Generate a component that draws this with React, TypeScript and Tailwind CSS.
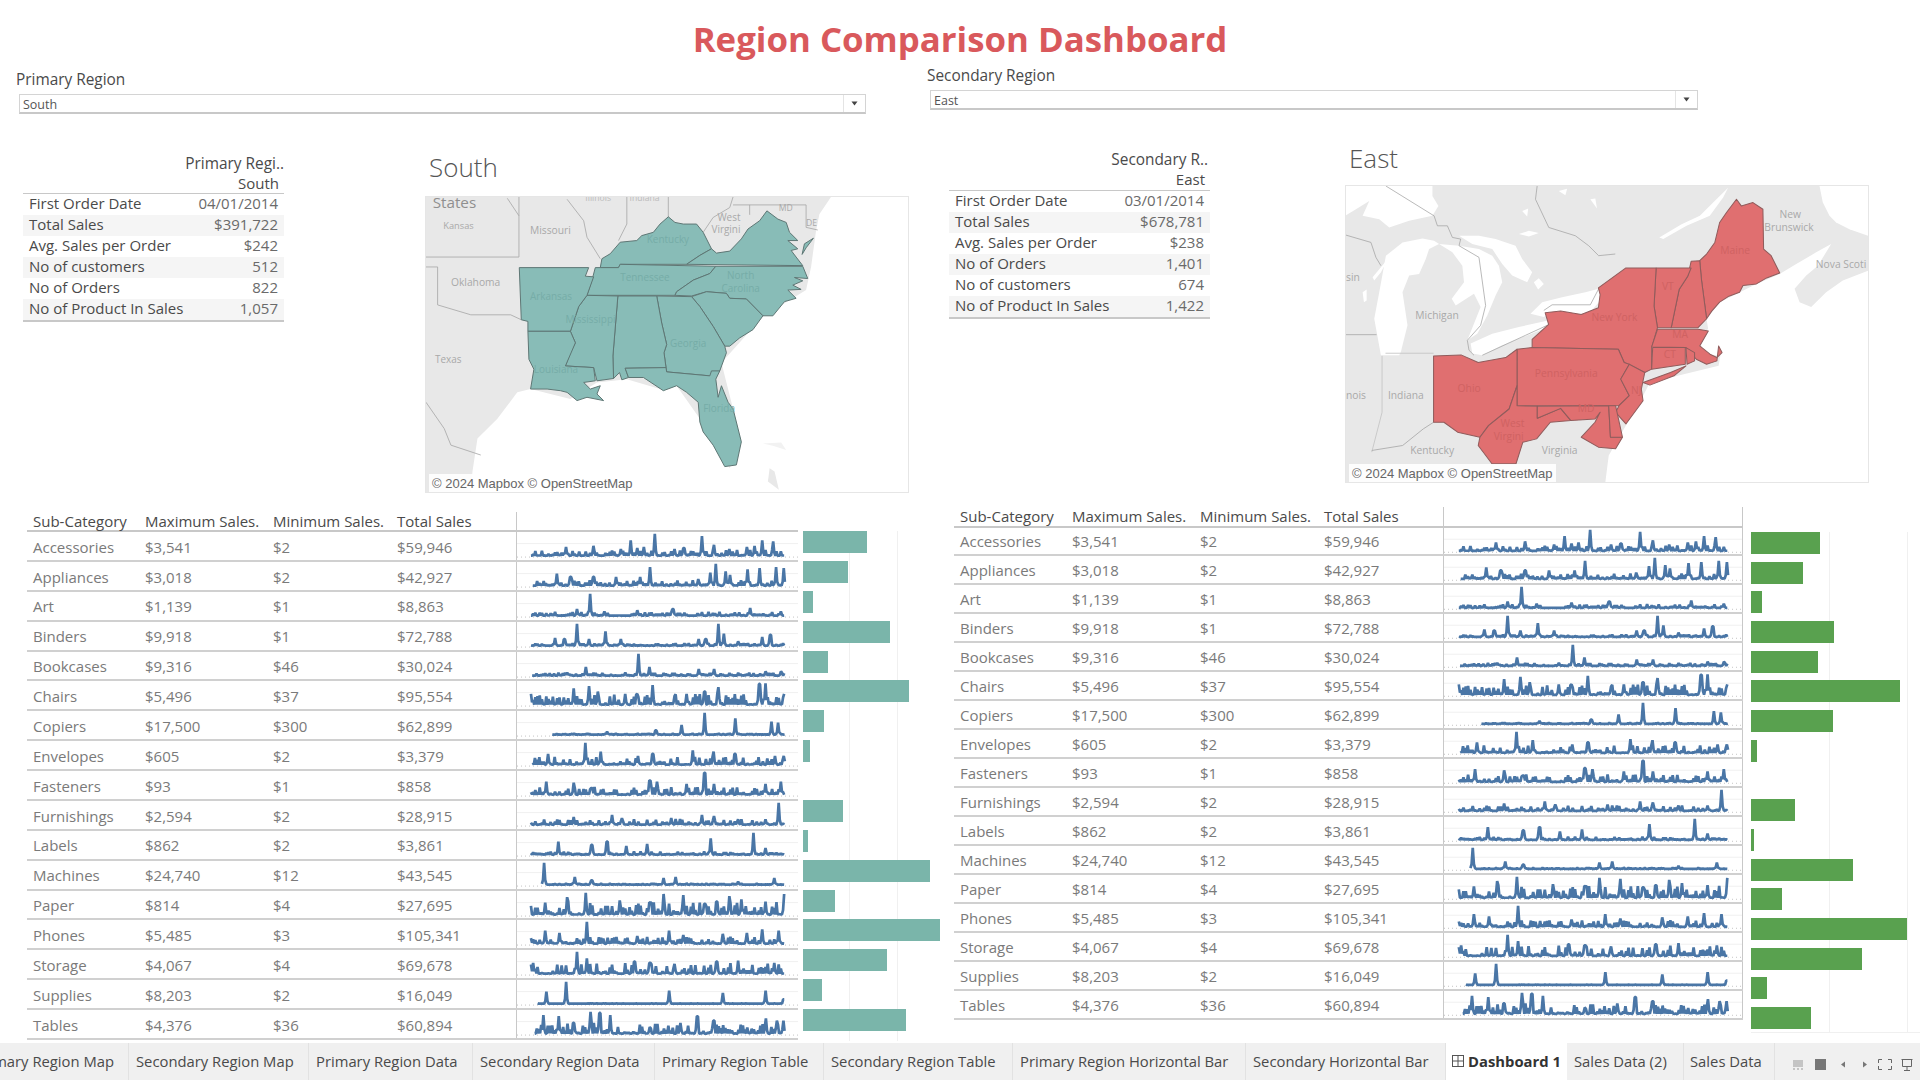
import React from "react";

const FONT = "font-['Open_Sans','Noto_Sans',sans-serif]";

type Row = { n: string; max: string; min: string; tot: string; lb: number; rb: number; start: number; noise: number; sp: number[][] };

const rows: Row[] = [
  { n: "Accessories", max: "$3,541", min: "$2", tot: "$59,946", lb: 64, rb: 69, start: 865, noise: 0.26, sp: [[922,.4],[968,.45],[1012,.3],[1028,.7],[1040,.35],[1050,.4],[1068,1],[1100,.3],[1116,.35],[1145,.9],[1165,.5],[1190,.3],[1220,.4],[1232,.45],[1245,.7],[1262,.65]] },
  { n: "Appliances", max: "$3,018", min: "$2", tot: "$42,927", lb: 45, rb: 52, start: 868, noise: 0.26, sp: [[908,.55],[930,.4],[968,.4],[1005,.4],[1045,.4],[1060,.85],[1140,.3],[1160,.6],[1168,1],[1185,.65],[1192,.5],[1220,.75],[1240,.8],[1268,.85],[1280,.8]] },
  { n: "Art", max: "$1,139", min: "$1", tot: "$8,863", lb: 10, rb: 11, start: 865, noise: 0.18, sp: [[940,.3],[962,1],[985,.2],[1040,.25],[1098,.3],[1225,.35],[1275,.2]] },
  { n: "Binders", max: "$9,918", min: "$1", tot: "$72,788", lb: 87, rb: 83, start: 865, noise: 0.12, sp: [[905,.35],[920,.3],[940,1],[960,.3],[988,.65],[1012,.3],[1140,.3],[1152,.3],[1172,1],[1182,.55],[1205,.2],[1245,.4],[1258,.5]] },
  { n: "Bookcases", max: "$9,316", min: "$46", tot: "$30,024", lb: 24.5, rb: 67, start: 867, noise: 0.14, sp: [[925,.15],[955,.4],[1020,.15],[1042,1],[1060,.4],[1140,.3],[1165,.3],[1250,.2],[1275,.2]] },
  { n: "Chairs", max: "$5,496", min: "$37", tot: "$95,554", lb: 106, rb: 149, start: 865, noise: 0.5, sp: [[865,.5],[935,.75],[960,.85],[975,.6],[1020,.5],[1040,.5],[1064,.9],[1100,.4],[1120,.5],[1150,.6],[1172,.8],[1240,.95],[1250,.98],[1280,.5]] },
  { n: "Copiers", max: "$17,500", min: "$300", tot: "$62,899", lb: 21, rb: 82, start: 900, noise: 0.07, sp: [[990,.15],[1070,.2],[1112,.45],[1150,1],[1200,.75],[1260,.6],[1270,.55]] },
  { n: "Envelopes", max: "$605", min: "$2", tot: "$3,379", lb: 7, rb: 6, start: 868, noise: 0.36, sp: [[893,.5],[955,1],[980,.6],[1040,.4],[1065,.5],[1130,.65],[1165,.6],[1200,.5],[1265,.4],[1280,.4]] },
  { n: "Fasteners", max: "$93", min: "$1", tot: "$858", lb: 0, rb: 0, start: 865, noise: 0.36, sp: [[890,.6],[935,.55],[965,.3],[1060,.65],[1072,.6],[1120,.5],[1150,1],[1165,.5],[1250,.5],[1275,.6]] },
  { n: "Furnishings", max: "$2,594", min: "$2", tot: "$28,915", lb: 40, rb: 44, start: 865, noise: 0.26, sp: [[935,.35],[998,.45],[1015,.3],[1095,.3],[1145,.45],[1165,.4],[1205,.25],[1250,.25],[1272,1]] },
  { n: "Labels", max: "$862", min: "$2", tot: "$3,861", lb: 5, rb: 3, start: 865, noise: 0.15, sp: [[910,.6],[965,.45],[990,.6],[1022,.4],[1055,.5],[1160,.75],[1230,1],[1250,.3]] },
  { n: "Machines", max: "$24,740", min: "$12", tot: "$43,545", lb: 127, rb: 102, start: 883, noise: 0.07, sp: [[886,1],[937,.35],[965,.2],[1082,.3],[1102,.35],[1205,.15],[1265,.3]] },
  { n: "Paper", max: "$814", min: "$4", tot: "$27,695", lb: 32, rb: 31, start: 865, noise: 0.62, sp: [[888,.55],[925,.8],[955,1],[1010,.65],[1060,.55],[1082,.95],[1115,.9],[1150,.5],[1170,.6],[1190,.85],[1210,.7],[1250,.6],[1280,.95]] },
  { n: "Phones", max: "$5,485", min: "$3", tot: "$105,341", lb: 137, rb: 156, start: 865, noise: 0.34, sp: [[865,.2],[888,.6],[912,.5],[957,1],[1040,.35],[1092,.6],[1115,.4],[1180,.45],[1220,.5],[1245,.65],[1272,.6]] },
  { n: "Storage", max: "$4,067", min: "$4", tot: "$69,678", lb: 84, rb: 111, start: 865, noise: 0.48, sp: [[868,.5],[940,1],[957,.7],[1035,.55],[1060,.5],[1100,.45],[1170,.55],[1205,.6],[1265,.5]] },
  { n: "Supplies", max: "$8,203", min: "$2", tot: "$16,049", lb: 19, rb: 16, start: 876, noise: 0.02, sp: [[890,.55],[923,1],[1092,.6],[1180,.5],[1250,.6],[1280,.2]] },
  { n: "Tables", max: "$4,376", min: "$36", tot: "$60,894", lb: 103, rb: 60, start: 871, noise: 0.5, sp: [[885,.85],[910,.8],[935,.5],[963,1],[978,.95],[995,.85],[1060,.3],[1110,.5],[1138,.8],[1165,.6],[1250,.7],[1268,.6],[1280,.6]] },
];

function sparkPath(r: Row, seed: number) {
  let s = seed * 7919 + 13;
  const rnd = () => {
    s = (s * 16807) % 2147483647;
    return s / 2147483647;
  };
  const pts: string[] = [];
  const x0 = 14 + ((r.start - 865) / 417) * 255;
  const base = 25.5;
  const amp = 23.5;
  const step = 1.1;
  let k = 0;
  for (let x = x0; x <= 269; x += step) {
    const u = rnd();
    // every other sample drops to the baseline, so the foot of the line reads as a solid mass
    let v = k % 2 === 0 ? u * u * r.noise : u * 0.04 * r.noise;
    for (const [p, h] of r.sp) {
      const px = 14 + ((p - 865) / 417) * 255;
      const d = Math.abs(px - x);
      if (d < step * 0.6) v = Math.max(v, h);
      else if (d < step * 1.5) v = Math.max(v, h * 0.22);
    }
    pts.push(`${x.toFixed(1)},${(base - v * amp).toFixed(1)}`);
    k++;
  }
  return "M" + pts.join("L");
}

function Spark({ r, i }: { r: Row; i: number }) {
  return (
    <svg viewBox="0 0 282 30" preserveAspectRatio="none" className="block w-full h-full">
      <line x1="0" x2="282" y1="12.5" y2="12.5" stroke="#f0f0f0" strokeWidth="1" vectorEffect="non-scaling-stroke" />
      <line x1="0" x2="282" y1="27" y2="27" stroke="#c4c4c4" strokeWidth="1" strokeDasharray="1 3" vectorEffect="non-scaling-stroke" />
      <path d={sparkPath(r, i + 1)} fill="none" stroke="#4a76a6" strokeWidth="2.7" strokeLinejoin="bevel" vectorEffect="non-scaling-stroke" />
    </svg>
  );
}

function SalesTable({ rowH, headH, sparkW, lastW, right }: { rowH: string; headH: string; sparkW: string; lastW: string; right?: boolean }) {
  const cellPad = right ? "pt-[1px]" : "pt-[2px]";
  return (
    <div className="flex flex-col">
      <div className={`flex items-center border-b-2 border-[#c8c8c8] text-[#4a4a4a] ${headH}`}>
        <div className="w-[118px] pl-[6px]">Sub-Category</div>
        <div className="w-[128px]">Maximum Sales.</div>
        <div className="w-[124px]">Minimum Sales.</div>
        <div className={lastW}>Total Sales</div>
        <div className={`${sparkW} h-full border-l border-[#c8c8c8] ${right ? "border-r" : ""}`} />
      </div>
      {rows.map((r, i) => (
        <div key={r.n} className={`flex items-center border-b-2 border-[#d0d0d0] text-[#7a7a7a] ${rowH}`}>
          <div className={`w-[118px] pl-[6px] ${cellPad}`}>{r.n}</div>
          <div className={`w-[128px] ${cellPad}`}>{r.max}</div>
          <div className={`w-[124px] ${cellPad}`}>{r.min}</div>
          <div className={`${lastW} ${cellPad}`}>{r.tot}</div>
          <div className={`${sparkW} h-full border-l border-[#c8c8c8] ${right ? "border-r" : ""}`}>
            <Spark r={r} i={i} />
          </div>
        </div>
      ))}
    </div>
  );
}

function Bars({ right }: { right?: boolean }) {
  return (
    <div className={right ? "relative ml-[8px] mt-[25px] w-[169px] h-[501px] border-b border-[#f0f0f0]" : "relative ml-[5px] mt-[19px] w-[160px] h-[510px]"}>
      <div className={`absolute top-0 bottom-0 w-px bg-[#f0f0f0] ${right ? "left-[78px]" : "left-[46px]"}`} />
      <div className={`absolute top-0 bottom-0 w-px bg-[#f0f0f0] ${right ? "left-[156px]" : "left-[94px]"}`} />
      <div className="relative flex flex-col">
        {rows.map((r) => (
          <div key={r.n} className={right ? "h-[29.7px]" : "h-[29.88px]"}>
            <div
              className={`h-[22px] ${right ? "bg-[#59a14f]" : "bg-[#7ab5aa]"}`}
              style={{ width: right ? r.rb : r.lb }}
            />
          </div>
        ))}
      </div>
    </div>
  );
}

function InfoTable({ head, sub, subH, headPad, items, width }: { head: string; sub: string; subH: string; headPad: string; items: string[][]; width: string }) {
  return (
    <div className={`${width} flex flex-col text-[#555]`}>
      <div className={`h-[20px] leading-[20px] text-right text-[15.4px] text-[#4a4a4a] whitespace-nowrap ${headPad}`}>{head}</div>
      <div className={`${subH} leading-[19px] text-right pr-[5px] text-[#4a4a4a]`}>{sub}</div>
      <div className="border-t border-b-2 border-[#c8c8c8]">
        {items.map((it, i) => (
          <div key={it[0]} className={`h-[21px] pb-[2px] flex items-center justify-between px-[6px] ${i % 2 === 1 ? "bg-[#f5f5f5]" : ""}`}>
            <span className="text-[#4a4a4a]">{it[0]}</span>
            <span className="text-[#6a6a6a]">{it[1]}</span>
          </div>
        ))}
      </div>
    </div>
  );
}

function Dropdown({ value, width }: { value: string; width: string }) {
  return (
    <div className={`${width} h-[20px] flex items-center justify-between bg-white border border-[#d4d4d4] border-b-2 border-b-[#c8c8c8] text-[12.5px] text-[#555]`}>
      <span className="pl-[3px] pt-[3px]">{value}</span>
      <span className="h-full w-[22px] border-l border-[#e4e4e4] flex items-center justify-center">
        <svg width="7" height="5" viewBox="0 0 7 5"><path d="M0.5 0.5H6.5L3.5 4.5Z" fill="#444" /></svg>
      </span>
    </div>
  );
}

const Attribution = () => (
  <div className="absolute left-[3px] bottom-0 h-[18px] pt-[2px] px-[3px] bg-white/90 flex items-center whitespace-nowrap font-['Liberation_Sans',sans-serif] text-[13px] text-[#666]">
    © 2024 Mapbox © OpenStreetMap
  </div>
);

const Label = ({ x, y, s = 30, c = "#a9a9a9", t }: { x: number; y: number; s?: number; c?: string; t: string }) => (
  <text x={x} y={y} fontSize={s} fill={c} fontFamily="'Open Sans',sans-serif">{t}</text>
);

function SouthMap() {
  const st = [
    "540,232 545,205 570,190 600,155 650,150 665,135 700,125 720,100 745,78 765,95 790,100 830,100 850,125 875,175 840,195 800,222 600,222 595,232",
    "800,222 840,195 875,175 890,188 930,182 965,145 985,115 1020,90 1042,60 1075,85 1100,95 1110,125 1135,150 1105,150 1135,175 1115,180 1130,200 1150,226",
    "1148,192 1155,160 1182,143 1160,172",
    "525,232 595,232 600,222 888,228 870,250 820,270 770,305 765,316 500,316 515,270",
    "888,228 1150,228 1165,265 1125,262 1150,272 1120,285 1145,298 1105,300 1130,325 1095,335 1060,378 1030,378 980,327 930,325 920,310 860,305 815,318 765,316 770,305 820,270 870,250",
    "815,320 860,305 920,310 930,325 980,327 1030,378 1000,420 960,445 930,470 915,470 880,410 840,350",
    "710,318 815,320 840,350 880,410 915,470 920,490 900,545 870,560 740,548 732,490 740,465 725,400",
    "593,318 710,318 725,400 740,465 732,490 738,535 615,537 625,565 605,572 598,550 580,568 578,500",
    "500,316 593,318 578,500 580,568 530,575 520,535 435,530 450,490 465,460 450,425 475,350",
    "296,232 505,232 495,258 520,260 500,316 475,350 450,425 322,425 322,395 302,390",
    "322,425 450,425 465,460 435,530 520,535 525,575 490,580 510,600 540,590 530,615 550,635 500,625 470,635 440,610 420,605 380,600 330,600 340,540 325,510",
    "615,537 738,535 740,548 870,560 875,545 900,545 888,570 895,625 905,590 925,640 940,660 965,760 950,830 915,835 880,770 850,730 840,700 835,640 800,610 770,590 730,605 670,565 625,565",
  ];
  const lines = [
    "295,18 295,200 15,200", "15,230 50,230 50,345 150,375 270,375 302,390", "440,25 490,90 500,140 540,205",
    "620,18 620,100 595,150", "745,18 745,80", "940,18 930,50 880,80 850,125", "940,42 1160,42 1160,110 1195,118", "990,72 990,42",
    "15,640 70,720 90,770 180,800", "260,22 295,75",
  ];
  return (
    <div className="relative w-[484px] h-[297px] border border-[#e6e6e6]">
      <svg viewBox="15 18 1452 894" preserveAspectRatio="none" className="block w-full h-full">
        <polygon points="15,18 1235,18 1200,70 1190,120 1175,230 1160,300 1030,380 905,520 965,760 930,840 840,690 770,590 720,600 620,570 530,580 450,630 330,600 290,610 230,690 170,750 155,850 150,912 15,912" fill="#e8e8e8" />
        <polygon points="1030,765 1085,762 1100,785 1060,772" fill="#f2f2f2" />
        <polygon points="1050,840 1065,850 1078,905 1045,880" fill="#e8e8e8" />
        {lines.map((l) => <polyline key={l} points={l} fill="none" stroke="#a8a8a8" strokeWidth="2.5" />)}
        {st.map((p) => <polygon key={p} points={p} fill="#88bcb7" stroke="#5e7674" strokeWidth="3" strokeLinejoin="round" />)}
        <Label x={35} y={52} s={46} c="#8f8f8f" t="States" />
        <Label x={67} y={115} s={28} t="Kansas" />
        <Label x={328} y={130} s={31} t="Missouri" />
        <Label x={90} y={287} s={31} t="Oklahoma" />
        <Label x={42} y={522} s={30} t="Texas" />
        <Label x={893} y={90} t="West" />
        <Label x={875} y={128} t="Virgini" />
        <Label x={1078} y={60} s={26} t="MD" />
        <Label x={1160} y={105} s={26} t="DE" />
        <Label x={495} y={30} s={26} c="#bbb" t="Illinois" />
        <Label x={628} y={30} s={26} c="#bbb" t="Indiana" />
        <Label x={680} y={158} c="#76aca7" t="Kentucky" />
        <Label x={600} y={272} c="#76aca7" t="Tennessee" />
        <Label x={922} y={268} c="#76aca7" t="North" />
        <Label x={905} y={307} c="#76aca7" t="Carolina" />
        <Label x={328} y={330} c="#76aca7" t="Arkansas" />
        <Label x={435} y={400} c="#76aca7" t="Mississippi" />
        <Label x={340} y={552} c="#76aca7" t="Louisiana" />
        <Label x={750} y={473} c="#76aca7" t="Georgia" />
        <Label x={850} y={670} c="#76aca7" t="Florida" />
      </svg>
      <Attribution />
    </div>
  );
}

function EastMap() {
  const st = [
    "1045,243 1065,223 1089,188 1103,128 1123,98 1152,58 1166,78 1200,68 1229,88 1231,208 1253,228 1278,280 1240,295 1210,313 1171,318 1161,338 1130,350 1103,368 1080,395 1065,418 1050,300",
    "1045,243 1050,300 1065,418 1040,445 962,445 985,330 1010,290 1020,245",
    "918,265 1020,265 1010,290 985,330 962,445 922,445 912,380",
    "830,265 918,265 912,380 922,445 905,505 905,570 885,580 825,550 808,510 557,505 557,480 605,435 595,400 640,395 700,405 750,385 755,345 750,325",
    "880,610 960,580 1005,560 970,590 900,618",
    "922,450 1040,450 1070,455 1045,500 1075,525 1095,535 1110,520 1100,500 1095,545 1065,555 1035,540 1005,505 905,503",
    "908,505 1003,505 1003,555 905,570",
    "1005,505 1030,520 1030,545 1008,555",
    "513,510 557,505 808,510 825,550 840,555 815,600 840,650 810,680 513,680",
    "840,555 885,580 875,630 880,665 830,735 800,700 810,680 840,650 815,600",
    "270,530 350,527 400,550 480,535 513,510 513,620 490,690 430,740 405,775 340,760 300,730 270,730",
    "405,775 430,740 490,690 513,620 513,680 572,682 572,718 640,688 670,725 610,730 570,780 530,790 510,855 440,855 400,800",
    "572,682 780,680 785,775 820,775 800,810 750,805 700,775 740,730 755,700 740,720 670,725 640,688 572,718",
    "780,680 800,680 820,775 785,775",
  ];
  const lines = [
    "120,0 265,90 275,120 305,120 320,155 345,160 340,180 400,215 420,360 405,420 365,465 370,495 385,510",
    "410,510 540,450 605,420", "595,375 620,358 735,358 760,310",
    "575,0 570,40 610,125 690,150 730,180 760,210 810,205",
    "0,148 75,170 90,215 105,240", "0,448 92,448",
  ];
  return (
    <div className="relative w-[524px] h-[298px] border border-[#e6e6e6]">
      <svg viewBox="15 18 1520 892" preserveAspectRatio="none" className="block w-full h-full">
        <rect x="15" y="18" width="1520" height="892" fill="#e8e8e8" />
        <polygon points="1535,500 1535,912 770,912 780,830 830,740 880,650 900,610 1100,560 1110,500" fill="#fff" />
        <g transform="translate(784 18) scale(0.968 1)" fill="#fff">
          <polygon points="510,265 560,235 620,200 665,175 625,240 590,270 555,310 570,350 605,365 650,320 700,285 777,255 777,510 280,510 270,460 295,430 290,400 330,350 390,320 440,295" />
          <polygon points="630,0 777,0 777,150 720,130 680,110 660,90 640,50" />
          <polygon points="148,155 215,115 270,90 310,50 355,5 340,35 300,90 230,120 160,160" />
        </g>
        <g transform="translate(15 18) scale(0.968 1)" fill="#fff">
          <polygon points="0,0 260,0 260,30 278,60 260,90 190,105 130,125 100,100 50,90 70,45 30,70 0,88" />
          <polygon points="105,510 85,400 100,320 120,210 170,170 230,158 265,165 280,175 250,190 240,220 220,265 190,270 170,320 185,420 165,500 160,510" />
          <polygon points="80,275 130,215 105,260 85,285" />
          <polygon points="280,175 340,180 400,190 440,210 460,240 470,290 450,330 425,390 395,445 365,465 405,365 385,325 330,360 318,340 355,290 350,240 320,200" />
          <polygon points="340,150 400,150 450,160 510,180 530,220 560,260 545,290 500,270 470,235 440,190 380,175" />
          <polygon points="375,475 440,445 520,425 608,405 608,425 470,480 410,510 380,505" />
          <polygon points="555,385 590,350 650,335 720,320 760,310 770,340 730,385 680,385 620,380 595,395" />
          <polygon points="50,320 62,312 62,345 54,350" />
          <polygon points="565,290 580,278 595,295 578,312" />
          <polygon points="520,145 550,135 580,142 550,152" />
          <polygon points="640,15 665,8 660,28" />
          <polygon points="735,40 750,38 755,68" />
          <polygon points="530,75 548,68 545,92" />
          {lines.map((l) => <polyline key={l} points={l} fill="none" stroke="#a0a0a0" strokeWidth="2.2" />)}
        </g>
        <polyline points="120,530 120,700 90,820" fill="none" stroke="#c4c4c4" strokeWidth="2.5" />
        <polyline points="130,522 270,522" fill="none" stroke="#c4c4c4" strokeWidth="2.5" />
        <polyline points="90,815 180,800 240,750 270,730" fill="none" stroke="#a8a8a8" strokeWidth="2.5" />
        {st.map((p) => <polygon key={p} points={p} fill="#e06f70" stroke="#905c5c" strokeWidth="3" strokeLinejoin="round" />)}
        <Label x={1277} y={115} t="New" />
        <Label x={1233} y={153} t="Brunswick" />
        <Label x={1383} y={265} t="Nova Scoti" />
        <Label x={217} y={418} t="Michigan" />
        <Label x={15} y={305} t="sin" />
        <Label x={137} y={660} t="Indiana" />
        <Label x={15} y={660} t="nois" />
        <Label x={202} y={825} t="Kentucky" />
        <Label x={585} y={827} t="Virginia" />
        <Label x={1105} y={222} c="#cf6262" t="Maine" />
        <Label x={730} y={425} c="#cf6262" t="New York" />
        <Label x={935} y={332} c="#cf6262" t="VT" />
        <Label x={965} y={477} c="#cf6262" t="MA" />
        <Label x={940} y={535} c="#cf6262" t="CT" />
        <Label x={565} y={595} c="#cf6262" t="Pennsylvania" />
        <Label x={340} y={640} c="#cf6262" t="Ohio" />
        <Label x={465} y={745} c="#cf6262" t="West" />
        <Label x={445} y={782} c="#cf6262" t="Virgini" />
        <Label x={845} y={645} c="#cf6262" t="NJ" />
        <Label x={690} y={700} c="#cf6262" t="MD" />
      </svg>
      <Attribution />
    </div>
  );
}

const tabs = [
  { t: "Primary Region Map", w: "w-[129px]", clip: true },
  { t: "Secondary Region Map", w: "w-[180px]" },
  { t: "Primary Region Data", w: "w-[164px]" },
  { t: "Secondary Region Data", w: "w-[182px]" },
  { t: "Primary Region Table", w: "w-[169px]" },
  { t: "Secondary Region Table", w: "w-[189px]" },
  { t: "Primary Region Horizontal Bar", w: "w-[233px]" },
  { t: "Secondary Horizontal Bar", w: "w-[200px]" },
];

function TabBar() {
  return (
    <div className="h-[37px] bg-[#f0f0f0] flex items-stretch text-[14.8px] text-[#4a4a4a] overflow-hidden">
      {tabs.map((t) => (
        <div key={t.t} className={`${t.w} shrink-0 flex items-center border-r border-[#e2e2e2] whitespace-nowrap overflow-hidden ${t.clip ? "justify-end pr-[14px]" : "justify-start pl-[7px]"}`}>
          {t.t}
        </div>
      ))}
      <div className="w-[121px] shrink-0 bg-white flex items-center justify-center gap-[4px] font-bold text-[#333] -mt-px">
        <svg width="12" height="12" viewBox="0 0 12 12" fill="none" stroke="#555" strokeWidth="1"><rect x="0.5" y="0.5" width="11" height="11" /><path d="M6 0.5V11.5M0.5 6H11.5" /></svg>
        Dashboard 1
      </div>
      <div className="w-[117px] shrink-0 flex items-center justify-start pl-[7px] border-r border-[#e2e2e2]">Sales Data (2)</div>
      <div className="w-[91px] shrink-0 flex items-center justify-start pl-[6px] border-r border-[#e2e2e2]">Sales Data</div>
      <div className="flex-1 flex items-center pl-[18px] pt-[6px]">
        <svg width="125" height="14" viewBox="0 0 125 14" fill="none">
          <rect x="0" y="2" width="10" height="7" fill="#c4c4c4" />
          <path d="M0 11h2M4 11h2M8 11h2" stroke="#c4c4c4" strokeWidth="2" />
          <rect x="22" y="1" width="11" height="11" fill="#777" />
          <path d="M52 3.5V9.5L48 6.5Z" fill="#777" />
          <path d="M70 3.5V9.5L74 6.5Z" fill="#777" />
          <path d="M85.5 5V1.5H89M95 1.5H98.5V5M85.5 8V11.5H89M95 11.5H98.5V8" stroke="#666" />
          <path d="M108.5 1.5H119.5M109.5 1.5V8.5H118.5V1.5M114 8.5V12M111 12.5H117" stroke="#666" />
        </svg>
      </div>
    </div>
  );
}

export default function App() {
  return (
    <div className={`w-[1920px] h-[1080px] bg-white overflow-hidden flex flex-col text-[15px] ${FONT}`}>
      <div className="h-[1043px] flex flex-col">
        <div className="h-[66px] pt-[14px] text-center text-[34.8px] leading-[50px] font-bold text-[#d9595c]">Region Comparison Dashboard</div>
        <div className="flex">
          <div className="w-[926px] shrink-0 flex flex-col">
            <div className="ml-[16px] mt-[4px] h-[20px] leading-[20px] text-[15.4px] text-[#4a4a4a]">Primary Region</div>
            <div className="ml-[19px] mt-[4px]"><Dropdown value="South" width="w-[847px]" /></div>
            <div className="flex mt-[36px] h-[343px]">
              <div className="ml-[23px] mt-[4px]">
                <InfoTable
                  width="w-[261px]"
                  head="Primary Regi.."
                  sub="South"
                  subH="h-[19px]"
                  headPad=""
                  items={[["First Order Date", "04/01/2014"], ["Total Sales", "$391,722"], ["Avg. Sales per Order", "$242"], ["No of customers", "512"], ["No of Orders", "822"], ["No of Product In Sales", "1,057"]]}
                />
              </div>
              <div className="ml-[141px] flex flex-col">
                <div className="h-[46px] pl-[4px] text-[26px] leading-[34px] font-light text-[#555]">South</div>
                <SouthMap />
              </div>
            </div>
            <div className="ml-[27px] mt-[19px] flex h-[531px] text-[15px]">
              <SalesTable rowH="h-[29.88px]" headH="h-[20px]" sparkW="w-[282px]" lastW="w-[119px]" />
              <Bars />
            </div>
          </div>
          <div className="flex-1 flex flex-col">
            <div className="ml-[1px] h-[20px] leading-[20px] text-[15.4px] text-[#4a4a4a]">Secondary Region</div>
            <div className="ml-[4px] mt-[4px]"><Dropdown value="East" width="w-[768px]" /></div>
            <div className="flex mt-[31px] h-[342px]">
              <div className="ml-[23px] mt-[9px]">
                <InfoTable
                  width="w-[261px]"
                  head="Secondary R.."
                  sub="East"
                  subH="h-[20px]"
                  headPad="pr-[2px]"
                  items={[["First Order Date", "03/01/2014"], ["Total Sales", "$678,781"], ["Avg. Sales per Order", "$238"], ["No of Orders", "1,401"], ["No of customers", "674"], ["No of Product In Sales", "1,422"]]}
                />
              </div>
              <div className="ml-[135px] flex flex-col">
                <div className="h-[45px] pl-[4px] text-[26px] leading-[34px] font-light text-[#555]">East</div>
                <EastMap />
              </div>
            </div>
            <div className="ml-[28px] mt-[24px] flex h-[530px]">
              <SalesTable right rowH="h-[28.97px]" headH="h-[20.5px]" sparkW="w-[300px]" lastW="w-[119px]" />
              <Bars right />
            </div>
          </div>
        </div>
      </div>
      <TabBar />
    </div>
  );
}
